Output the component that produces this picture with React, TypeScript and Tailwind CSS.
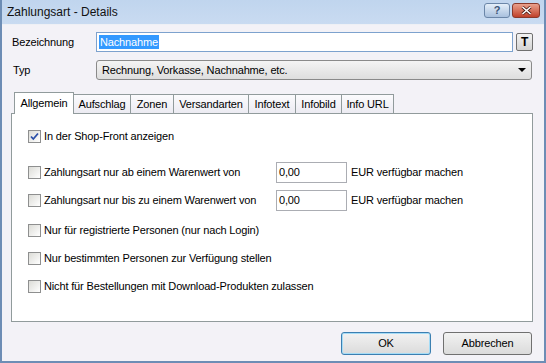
import React from "react"

const font = { fontFamily: '"Liberation Sans", Arial, sans-serif' }

function Check({ checked = false }: { checked?: boolean }) {
    return (
        <span className="relative w-[13px] h-[13px] shrink-0 border border-[#8e8f8f] bg-gradient-to-br from-[#dcdcd7] to-[#ffffff]">
            {checked && (
                <svg className="absolute left-[1px] top-[1px]" width="9" height="9" viewBox="0 0 9 9">
                    <path d="M1 4.5 L3.3 7 L8 1.5" fill="none" stroke="#2a4fa8" strokeWidth="1.8" />
                </svg>
            )}
        </span>
    )
}

function CheckRow({ label, checked = false }: { label: string; checked?: boolean }) {
    return (
        <div className="flex items-center h-[21px] gap-[3px]">
            <Check checked={checked} />
            <span>{label}</span>
        </div>
    )
}

function AmountRow({ label }: { label: string }) {
    return (
        <div className="flex items-center h-[21px]">
            <div className="flex items-center gap-[3px] w-[248px]">
                <Check />
                <span>{label}</span>
            </div>
            <div className="w-[71px] h-[21px] border border-[#abadb3] bg-white px-[2px] flex items-center">0,00</div>
            <span className="ml-[4px]">EUR verfügbar machen</span>
        </div>
    )
}

const tabs = [
    { name: "Aufschlag", w: "w-[57px]" },
    { name: "Zonen", w: "w-[43px]" },
    { name: "Versandarten", w: "w-[75px]" },
    { name: "Infotext", w: "w-[47px]" },
    { name: "Infobild", w: "w-[46px]" },
    { name: "Info URL", w: "w-[52px]" },
]

export default function App() {
    return (
        <div className="w-[546px] h-[363px] bg-[#9fb9d8] text-[11px] tracking-[-0.15px] text-black overflow-hidden" style={font}>
            <div className="w-full h-full flex flex-col border-l-2 border-r-2 border-b-2 border-[#6d8db5]">
                {/* title bar */}
                <div className="h-[24px] shrink-0 flex items-center bg-gradient-to-b from-[#c0d5ee] to-[#c9dbf1] pl-[5px] pr-[4px]">
                    <span className="text-[12px] tracking-normal text-[#111]">Zahlungsart - Details</span>
                    <div className="ml-auto flex gap-[2px] mt-[-4px]">
                        <div className="w-[26px] h-[15px] rounded-[3px] border border-[#6b86a8] bg-gradient-to-b from-[#e4eef9] to-[#a9c1de] flex items-center justify-center text-[11px] font-bold text-[#3b5577] leading-none">?</div>
                        <div className="w-[28px] h-[15px] rounded-[3px] border border-[#8a3a2c] bg-gradient-to-b from-[#e9a08c] to-[#c0402a] flex items-center justify-center">
                            <svg width="11" height="9" viewBox="0 0 11 9">
                                <path d="M1.5 1 L9.5 8 M9.5 1 L1.5 8" stroke="#4a1a12" strokeWidth="3" />
                                <path d="M1.5 1 L9.5 8 M9.5 1 L1.5 8" stroke="#ffffff" strokeWidth="1.6" />
                            </svg>
                        </div>
                    </div>
                </div>

                {/* body */}
                <div className="flex-1 bg-[#f3f2f7] pl-[9px] pr-[11px] pt-[7px] flex flex-col border-t border-[#eef0f5]">
                    <div className="flex items-center h-[20px]">
                        <span className="w-[85px] pl-[1px]">Bezeichnung</span>
                        <div className="w-[417px] h-[20px] border border-[#7da2ce] bg-white flex items-center px-[2px]">
                            <span className="bg-[#3399ff] text-white px-[1px] leading-[14px]">Nachnahme</span>
                        </div>
                        <div className="ml-[3px] w-[17px] h-[18px] rounded-[2px] border border-[#707070] bg-gradient-to-b from-[#f2f2f2] to-[#d4d4d4] flex items-center justify-center font-bold text-[12px]">T</div>
                    </div>
                    <div className="flex items-center h-[20px] mt-[8px]">
                        <span className="w-[85px] pl-[2px]">Typ</span>
                        <div className="w-[436px] h-[20px] rounded-[3px] border border-[#8a8a8a] bg-gradient-to-b from-[#f4f4f4] to-[#dedede] flex items-center px-[5px]">
                            <span>Rechnung, Vorkasse, Nachnahme, etc.</span>
                            <svg className="ml-auto" width="8" height="4" viewBox="0 0 8 4">
                                <path d="M0 0 H8 L4 4 Z" fill="#000" />
                            </svg>
                        </div>
                    </div>

                    {/* tabs */}
                    <div className="flex items-end h-[22px] mt-[11px] pl-[3px]">
                        <div className="relative z-10 w-[60px] h-[22px] bg-white border border-b-0 border-[#919b9c] flex items-start justify-center pt-[2px] mb-[-1px]">
                            Allgemein
                        </div>
                        {tabs.map((t) => (
                            <div
                                key={t.name}
                                className={`${t.w} h-[19px] bg-gradient-to-b from-[#fbfbfd] to-[#ecebf2] border border-b-0 border-l-0 border-[#919b9c] flex items-center justify-center`}
                            >
                                {t.name}
                            </div>
                        ))}
                    </div>
                    <div className="w-[522px] h-[209px] bg-white border border-[#919b9c] pl-[16px] pt-[12px] flex flex-col">
                        <CheckRow label="In der Shop-Front anzeigen" checked />
                        <div className="mt-[15px]">
                            <AmountRow label="Zahlungsart nur ab einem Warenwert von" />
                        </div>
                        <div className="mt-[7px]">
                            <AmountRow label="Zahlungsart nur bis zu einem Warenwert von" />
                        </div>
                        <div className="mt-[9px]">
                            <CheckRow label="Nur für registrierte Personen (nur nach Login)" />
                        </div>
                        <div className="mt-[7px]">
                            <CheckRow label="Nur bestimmten Personen zur Verfügung stellen" />
                        </div>
                        <div className="mt-[7px]">
                            <CheckRow label="Nicht für Bestellungen mit Download-Produkten zulassen" />
                        </div>
                    </div>

                    {/* buttons */}
                    <div className="flex justify-end gap-[12px] mt-[10px] pr-[1px]">
                        <button className="w-[90px] h-[23px] rounded-[3px] border border-[#3c7fb1] bg-gradient-to-b from-[#f2f2f2] to-[#dbdbdb] shadow-[inset_0_0_0_1px_#a5dcf6]">OK</button>
                        <button className="w-[89px] h-[23px] rounded-[3px] border border-[#707070] bg-gradient-to-b from-[#f2f2f2] to-[#dbdbdb]">Abbrechen</button>
                    </div>
                </div>
            </div>
        </div>
    )
}
